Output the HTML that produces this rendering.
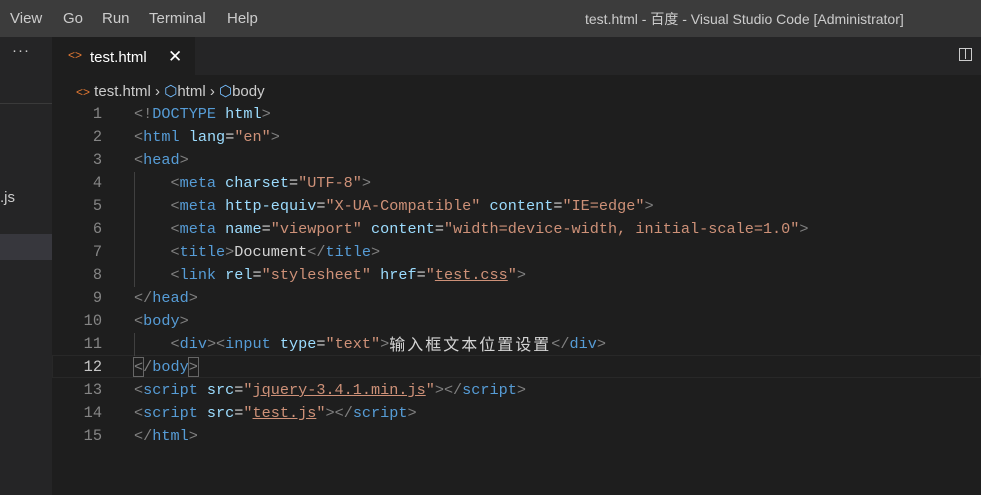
<!DOCTYPE html>
<html><head><meta charset="utf-8"><style>
body{margin:0;width:981px;height:495px;overflow:hidden;background:#1e1e1e;font-family:"Liberation Sans","Noto Sans CJK SC",sans-serif;position:relative}
.menu{position:absolute;left:0;top:0;width:981px;height:37px;background:#3c3c3c;color:#ccc;font-size:15px}
.menu span{position:absolute;top:10px}
.side{position:absolute;left:0;top:37px;width:52px;height:458px;background:#252526}
.tabs{position:absolute;left:52px;top:37px;width:929px;height:38px;background:#252526}
.tab{position:absolute;left:52px;top:37px;width:143px;height:38px;background:#1e1e1e;color:#fff;font-size:15px}
.code{position:absolute;left:0;top:0;font-family:"Liberation Mono","Noto Sans CJK SC",monospace;font-size:15.2px;color:#9cdcfe}
.l{position:absolute;height:23px;line-height:23px;white-space:pre}
.n{position:absolute;width:102px;text-align:right;color:#858585;font-family:"Liberation Mono",monospace;font-size:15.3px;line-height:23px}
.t{color:#808080}.k{color:#569cd6}.a{color:#9cdcfe}.s{color:#ce9178}.w{color:#d4d4d4}
.u{text-decoration:underline;text-decoration-color:#ce9178}
.g{position:absolute;width:1px;background:#404040}
.cjk{font-family:"Noto Sans CJK SC",sans-serif;font-size:16px;letter-spacing:2px;display:inline-block;height:23px;line-height:21px;vertical-align:top}
</style></head><body>
<div class="menu"><span style="left:10px">View</span><span style="left:63px">Go</span><span style="left:102px">Run</span><span style="left:149px">Terminal</span><span style="left:227px">Help</span><span style="left:585px;font-size:14px;top:9px">test.html - 百度 - Visual Studio Code [Administrator]</span></div>
<div class="side"><div style="position:absolute;left:0;top:66px;width:52px;height:1px;background:#3a3a3a"></div><div style="position:absolute;left:0;top:197px;width:52px;height:26px;background:#37373d"></div><span style="position:absolute;left:0;top:152px;color:#ccc;font-size:15px">.js</span><span style="position:absolute;left:12px;top:5px;color:#ccc;font-size:15px;letter-spacing:1px">···</span></div>
<div class="tabs"><span style="position:absolute;right:9px;top:11px;width:13px;height:13px;border:1.5px solid #ccc;box-sizing:border-box"><span style="position:absolute;left:4.5px;top:0;width:1.5px;height:10px;background:#ccc"></span></span></div>
<div class="tab"><span style="position:absolute;left:16px;top:11px;color:#e37933;font-size:12px">&lt;&gt;</span><span style="position:absolute;left:38px;top:12px">test.html</span><span style="position:absolute;left:116px;top:10px;font-size:17px">✕</span></div>
<div style="position:absolute;left:76px;top:82px;color:#ccc;font-size:15px"><span style="color:#e37933;font-size:12px">&lt;&gt;</span> test.html › <span style="color:#75beff">⬡</span>html › <span style="color:#75beff">⬡</span>body</div>
<div style="position:absolute;left:52px;top:355px;width:929px;height:23px;box-shadow:inset 0 0 0 1px #282828"></div>
<div class="g" style="left:134px;top:172px;height:115px"></div>
<div class="g" style="left:134px;top:333px;height:23px"></div>
<div class="code">
<div class="n" style="top:103px">1</div><div class="l" style="left:134px;top:103px"><span class="t">&lt;!</span><span class="k">DOCTYPE</span> <span class="a">html</span><span class="t">&gt;</span></div>
<div class="n" style="top:126px">2</div><div class="l" style="left:134px;top:126px"><span class="t">&lt;</span><span class="k">html</span> <span class="a">lang</span><span class="w">=</span><span class="s">"en"</span><span class="t">&gt;</span></div>
<div class="n" style="top:149px">3</div><div class="l" style="left:134px;top:149px"><span class="t">&lt;</span><span class="k">head</span><span class="t">&gt;</span></div>
<div class="n" style="top:172px">4</div><div class="l" style="left:134px;top:172px">    <span class="t">&lt;</span><span class="k">meta</span> charset<span class="w">=</span><span class="s">"UTF-8"</span><span class="t">&gt;</span></div>
<div class="n" style="top:195px">5</div><div class="l" style="left:134px;top:195px">    <span class="t">&lt;</span><span class="k">meta</span> http-equiv<span class="w">=</span><span class="s">"X-UA-Compatible"</span> content<span class="w">=</span><span class="s">"IE=edge"</span><span class="t">&gt;</span></div>
<div class="n" style="top:218px">6</div><div class="l" style="left:134px;top:218px">    <span class="t">&lt;</span><span class="k">meta</span> name<span class="w">=</span><span class="s">"viewport"</span> content<span class="w">=</span><span class="s">"width=device-width, initial-scale=1.0"</span><span class="t">&gt;</span></div>
<div class="n" style="top:241px">7</div><div class="l" style="left:134px;top:241px">    <span class="t">&lt;</span><span class="k">title</span><span class="t">&gt;</span><span class="w">Document</span><span class="t">&lt;/</span><span class="k">title</span><span class="t">&gt;</span></div>
<div class="n" style="top:264px">8</div><div class="l" style="left:134px;top:264px">    <span class="t">&lt;</span><span class="k">link</span> rel<span class="w">=</span><span class="s">"stylesheet"</span> href<span class="w">=</span><span class="s">"<span class="u">test.css</span>"</span><span class="t">&gt;</span></div>
<div class="n" style="top:287px">9</div><div class="l" style="left:134px;top:287px"><span class="t">&lt;/</span><span class="k">head</span><span class="t">&gt;</span></div>
<div class="n" style="top:310px">10</div><div class="l" style="left:134px;top:310px"><span class="t">&lt;</span><span class="k">body</span><span class="t">&gt;</span></div>
<div class="n" style="top:333px">11</div><div class="l" style="left:134px;top:333px">    <span class="t">&lt;</span><span class="k">div</span><span class="t">&gt;&lt;</span><span class="k">input</span> type<span class="w">=</span><span class="s">"text"</span><span class="t">&gt;</span><span class="w cjk">输入框文本位置设置</span><span class="t">&lt;/</span><span class="k">div</span><span class="t">&gt;</span></div>
<div class="n" style="top:356px;color:#c6c6c6">12</div><div class="l" style="left:134px;top:356px"><span class="t" style="outline:1px solid #666">&lt;</span><span class="t">/</span><span class="k">body</span><span class="t" style="outline:1px solid #666">&gt;</span></div>
<div class="n" style="top:379px">13</div><div class="l" style="left:134px;top:379px"><span class="t">&lt;</span><span class="k">script</span> src<span class="w">=</span><span class="s">"<span class="u">jquery-3.4.1.min.js</span>"</span><span class="t">&gt;&lt;/</span><span class="k">script</span><span class="t">&gt;</span></div>
<div class="n" style="top:402px">14</div><div class="l" style="left:134px;top:402px"><span class="t">&lt;</span><span class="k">script</span> src<span class="w">=</span><span class="s">"<span class="u">test.js</span>"</span><span class="t">&gt;&lt;/</span><span class="k">script</span><span class="t">&gt;</span></div>
<div class="n" style="top:425px">15</div><div class="l" style="left:134px;top:425px"><span class="t">&lt;/</span><span class="k">html</span><span class="t">&gt;</span></div>
</div>
</body></html>
